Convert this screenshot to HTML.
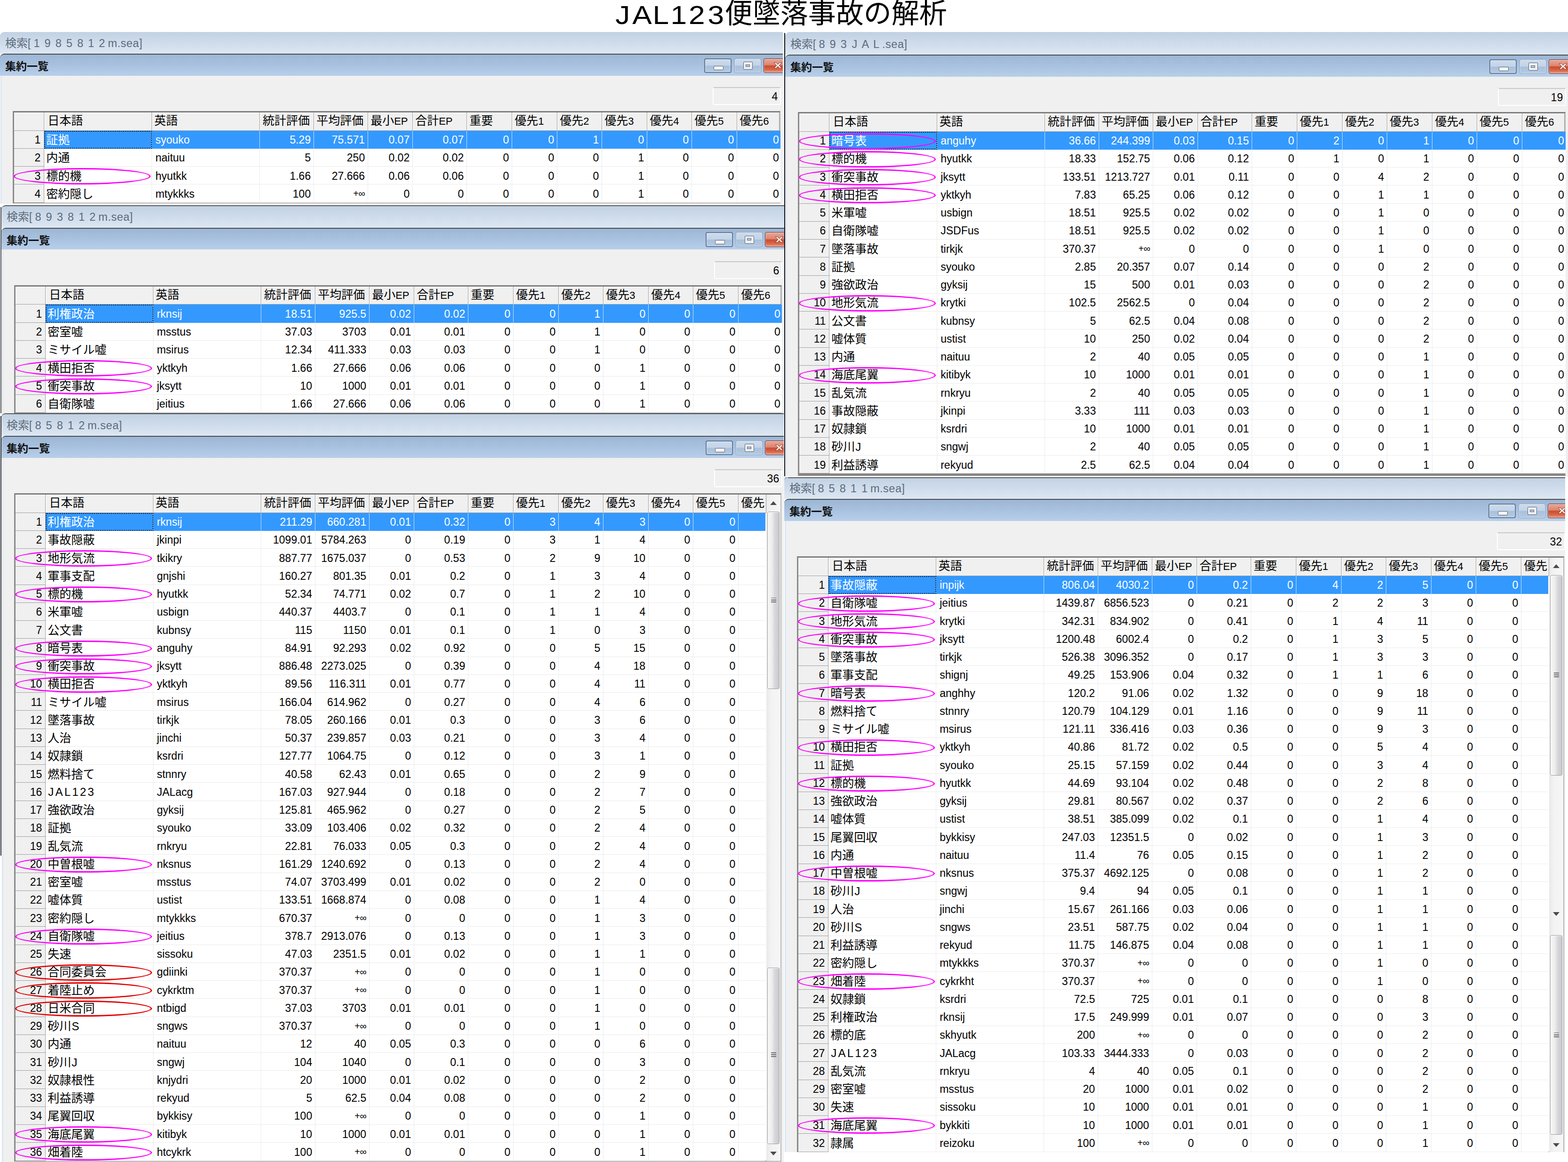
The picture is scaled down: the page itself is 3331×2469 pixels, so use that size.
<!DOCTYPE html><html lang="ja"><head><meta charset="utf-8"><title>JAL123便墜落事故の解析</title><style>
*{margin:0;padding:0;box-sizing:border-box}
html,body{width:3331px;height:2469px;background:#fff;overflow:hidden}
body{position:relative;font-family:"Liberation Sans","Noto Sans CJK JP",sans-serif;color:#000}
.ttl{position:absolute;left:1302px;top:-1px;height:60px;font-size:59px;line-height:60px;white-space:nowrap}
.ttl span{display:inline-block;width:58.4px;text-align:center;vertical-align:top;height:60px}
.ttl span.a{font-size:55px;transform:scaleX(1.13);position:relative;top:2.7px}
.ttl span.k{width:auto}
.ttl .j{margin-left:-.8px}
.w{position:absolute;overflow:hidden}
.wi{position:absolute;left:0;width:1700px}
.sbar{position:absolute;left:0;top:68px;width:1700px;height:46px;background:linear-gradient(#c2d1e3,#dce7f3);border-top-left-radius:9px}
.sbar.tl{top:66px;height:48px;border-top:2px solid #5a5a5a}
.sbar span{position:absolute;left:11px;top:8.5px;font-size:23.5px;line-height:30px;color:#5d6b7c;white-space:nowrap}
.sbar.tl span{left:11px;top:8.5px}
.sbar i{display:inline-block;width:23.1px;text-align:center;font-style:normal}
.sbar q{quotes:none;display:inline-block;width:9px;text-align:center}
.sbar a{letter-spacing:.5px;margin-left:1px}
.tbar{position:absolute;left:0;top:114px;width:1700px;height:46.5px;border-top:2px solid #4c4c4c;background:linear-gradient(#9cb6d5,#a6bfdd 40%,#b7cfea);border-top-left-radius:9px}
.tbar>span{position:absolute;left:11px;top:10px;font-size:23px;line-height:30px;color:#111;white-space:nowrap}
.tbar .j{font-weight:bold}
.bt{position:absolute;top:7.7px;height:31.6px;border:1.5px solid #6f86a4;border-radius:4px;background:linear-gradient(#cddbec 0,#c3d4e8 48%,#a9c0db 52%,#b4cae3 100%);box-shadow:inset 0 0 0 1px rgba(255,255,255,.45)}
.mn{left:1496.3px;width:57.7px;border:2px solid #5f7898}
.mn>div{position:absolute;left:18px;top:14.5px;width:21px;height:9px;background:#f4f4f4;border:1.5px solid #55667c;border-radius:2px}
.rs{left:1559.5px;width:57.2px;border-color:#8ea3bf}
.rs>div{position:absolute;left:18px;top:6.5px;width:20.5px;height:17px;background:#f0f0f0;border:1.5px solid #55667c;border-radius:2px}
.rs>div>div{position:absolute;left:4px;top:4.5px;width:9.5px;height:5px;background:#b8c8dc;border:1.5px solid #55667c}
.cl{left:1622px;width:62px;border-color:#5e2a28;background:linear-gradient(#e9a898 0,#dc8470 45%,#cd4a2c 52%,#d9694e 80%,#e9a088 100%)}
.cl svg{position:absolute;left:18.5px;top:6.5px}
.pn{position:absolute;left:0;top:160.5px;width:1700px;background:#f0f0f0}
.lf{position:absolute;left:0;top:0;width:4px;height:100%;background:linear-gradient(90deg,#fff 0,#d9e3f1 50%,#e4ebf5 100%)}
.ll{position:absolute;left:-2px;top:66px;width:2px;background:#333}
.cnt{position:absolute;left:1513.6px;top:185px;width:145.1px;height:38.4px;border:2px solid #fff;border-top-color:#c9c9c9;border-radius:3px;background:#f0f0f0;font-size:23px;line-height:36px;text-align:right;padding-right:4.5px}
.tb{position:absolute;box-sizing:content-box;border:3px solid #8a8a8a;border-right-width:2px;border-bottom-width:2.5px;border-top-color:#7e7e7e;border-right-color:#b8b8b8;border-bottom-color:#8a8a8a;background:#fff;overflow:visible}
.r{position:absolute;left:0;height:38.25px;display:flex;white-space:nowrap}
.r span{display:block;flex:none;height:38.25px;line-height:37.25px;padding:1.5px 5.5px 0 0;border-right:1.2px solid #ebebeb;border-bottom:1.2px solid #ebebeb;background:#fff;text-align:right;font-size:23px;overflow:hidden}
.r span:nth-child(1){width:63.5px;background:#f0f0f0;border-right:1.5px solid #a0a0a0;border-bottom:1.5px solid #a0a0a0;padding-right:6.5px}
.r span:nth-child(2){width:228.9px;text-align:left;padding-left:4.5px;font-size:25px}
.r span:nth-child(3){width:229.7px;text-align:left;padding-left:7.5px}
.r span:nth-child(4){width:114.3px}
.r span:nth-child(5){width:115px}
.r span:nth-child(6){width:95px}
.r span:nth-child(7){width:115px}
.r span:nth-child(8){width:96px}
.r span:nth-child(9){width:96px}
.r span:nth-child(10){width:95px}
.r span:nth-child(11){width:96px}
.r span:nth-child(12){width:95px}
.r span:nth-child(13){width:96px}
.r span:nth-child(14){width:92.5px;padding-right:3.5px;border-right:none}
.sc .r span:nth-child(14){width:57.5px}
.r.h span{background:#f0f0f0;border-right:1.5px solid #a0a0a0;border-bottom:1.5px solid #a0a0a0;text-align:left;padding-left:5.5px;padding-right:0;font-size:22px;line-height:34.25px;box-shadow:inset 1.5px 1.5px 0 #fafafa}
.r.h span:nth-child(2){padding-left:7.5px}
.r.h span:nth-child(3){padding-left:5px}
.r.sel span{background:#3399ff;color:#fff;border-bottom-color:#3399ff;border-right-color:#c8e0f8}
.r.sel span:nth-child(1){background:#f0f0f0;color:#000;border-bottom-color:#a0a0a0;border-right-color:#a0a0a0}
.r.sel span:nth-child(2){outline:2px dotted #001c4a;outline-offset:-2.5px}
.r u{text-decoration:none;font-size:20px;letter-spacing:-.5px;position:relative;top:-1.5px}
.j{display:inline-block;vertical-align:baseline;white-space:nowrap;font-weight:normal;line-height:1;font-family:"Liberation Sans","Noto Sans CJK JP",sans-serif}
.r.h .j{font-size:25px}
em{font-style:normal}
em.f1{margin-left:1px;font-size:24px}
em.f2{letter-spacing:3.2px;font-size:24px;margin-left:1px;position:relative;top:-1px}
.el{position:absolute;left:-1.5px;width:291px;height:34.5px;border:3px solid #ff00ff;border-radius:50%;z-index:3}
.sb{position:absolute;width:30px;background:linear-gradient(90deg,#e9e9e9 0,#f3f3f3 35%,#f6f6f6 100%);z-index:2}
.th{position:absolute;left:2px;width:26px;border:1.2px solid #9c9c9c;border-radius:3.5px;background:linear-gradient(90deg,#f7f7f7 0,#eeeeef 35%,#d6d6da 65%,#c9c9ce 100%);box-shadow:inset 1px 1px 0 #fff}
.gr{position:absolute;left:7.5px;width:10.5px;height:10.5px;background:linear-gradient(#6e6e6e 0,#6e6e6e 1.5px,transparent 1.5px,transparent 4.2px,#6e6e6e 4.2px,#6e6e6e 5.7px,transparent 5.7px,transparent 8.4px,#6e6e6e 8.4px,#6e6e6e 9.9px,transparent 9.9px)}
.au,.ad{position:absolute;left:8px;width:0;height:0;border-left:7.5px solid transparent;border-right:7.5px solid transparent}
.au{border-bottom:8px solid #4a4a4a}
.ad{border-top:8px solid #4a4a4a}
</style></head><body><div class="ttl"><span class="a" style="width:41.35px">J</span><span class="a" style="width:41.75px">A</span><span class="a" style="width:37.70px">L</span><span class="a" style="width:37.70px">1</span><span class="a" style="width:40.40px">2</span><span class="a" style="width:39.60px">3</span><span class="k"><b class="j">便墜落事故の解析</b></span></div><div class="w" style="left:0px;top:60px;width:1663px;height:372.5px;z-index:1"><div class="wi" style="top:-60px"><div class="sbar"><span><b class="j" style="font-size:24px;margin-right:-1.5px">検索</b><q>[</q><i>1</i><i>9</i><i>8</i><i>5</i><i>8</i><i>1</i><i>2</i><a>m.sea]</a></span></div><div class="tbar"><span><b class="j">集約一覧</b></span><div class="bt mn"><div></div></div><div class="bt rs"><div><div></div></div></div><div class="bt cl"><svg width="21" height="16" viewBox="0 0 28 20"><path d="M3 2 L9 2 L14 7.5 L19 2 L25 2 L17.5 10 L25 18 L19 18 L14 12.5 L9 18 L3 18 L10.5 10 Z" fill="#fff" stroke="#6a2a20" stroke-width="1.2"/></svg></div></div><div class="pn" style="height:272.0px"><div class="lf"></div></div><div class="cnt">4</div><div class="tb" style="left:27.3px;top:236.4px;width:1626px;height:190.75px"><div class="r h" style="top:0"><span style="width:63.5px"></span><span style="width:228.9px"><b class="j">日本語</b></span><span style="width:229.7px"><b class="j">英語</b></span><span style="width:114.3px"><b class="j">統計評価</b></span><span style="width:115px"><b class="j">平均評価</b></span><span style="width:95px"><b class="j">最小</b>EP</span><span style="width:115px"><b class="j">合計</b>EP</span><span style="width:96px"><b class="j">重要</b></span><span style="width:96px"><b class="j">優先</b>1</span><span style="width:95px"><b class="j">優先</b>2</span><span style="width:96px"><b class="j">優先</b>3</span><span style="width:95px"><b class="j">優先</b>4</span><span style="width:96px"><b class="j">優先</b>5</span><span style="width:90.59999999999991px"><b class="j">優先</b>6</span></div><div class="r sel" style="top:38.25px"><span>1</span><span><b class="j">証拠</b></span><span>syouko</span><span>5.29</span><span>75.571</span><span>0.07</span><span>0.07</span><span>0</span><span>0</span><span>1</span><span>0</span><span>0</span><span>0</span><span>0</span></div><div class="r" style="top:76.50px"><span>2</span><span><b class="j">内通</b></span><span>naituu</span><span>5</span><span>250</span><span>0.02</span><span>0.02</span><span>0</span><span>0</span><span>0</span><span>1</span><span>0</span><span>0</span><span>0</span></div><div class="r" style="top:114.75px"><span>3</span><span><b class="j">標的機</b></span><span>hyutkk</span><span>1.66</span><span>27.666</span><span>0.06</span><span>0.06</span><span>0</span><span>0</span><span>0</span><span>1</span><span>0</span><span>0</span><span>0</span></div><div class="r" style="top:153.00px"><span>4</span><span><b class="j">密約隠し</b></span><span>mtykkks</span><span>100</span><span><u>+∞</u></span><span>0</span><span>0</span><span>0</span><span>0</span><span>0</span><span>1</span><span>0</span><span>0</span><span>0</span></div><div class="el" style="top:117.95px;border-color:#ff00ff"></div></div></div></div><div class="w" style="left:1668px;top:62px;width:1663px;height:949.5px;z-index:1"><div class="wi" style="top:-60px"><div class="sbar" style="box-shadow:0 -2px 0 #c2d1e3"><span><b class="j" style="font-size:24px;margin-right:-1.5px">検索</b><q>[</q><i>8</i><i>9</i><i>3</i><i>J</i><i>A</i><i>L</i><a>.sea]</a></span></div><div class="tbar"><span><b class="j">集約一覧</b></span><div class="bt mn"><div></div></div><div class="bt rs"><div><div></div></div></div><div class="bt cl"><svg width="21" height="16" viewBox="0 0 28 20"><path d="M3 2 L9 2 L14 7.5 L19 2 L25 2 L17.5 10 L25 18 L19 18 L14 12.5 L9 18 L3 18 L10.5 10 Z" fill="#fff" stroke="#6a2a20" stroke-width="1.2"/></svg></div></div><div class="pn" style="height:849.0px"><div class="lf"></div></div><div class="cnt">19</div><div class="tb" style="left:27.3px;top:236.4px;width:1626px;height:764.50px;border-bottom:5px solid #858585"><div class="r h" style="top:0"><span style="width:63.5px"></span><span style="width:228.9px"><b class="j">日本語</b></span><span style="width:229.7px"><b class="j">英語</b></span><span style="width:114.3px"><b class="j">統計評価</b></span><span style="width:115px"><b class="j">平均評価</b></span><span style="width:95px"><b class="j">最小</b>EP</span><span style="width:115px"><b class="j">合計</b>EP</span><span style="width:96px"><b class="j">重要</b></span><span style="width:96px"><b class="j">優先</b>1</span><span style="width:95px"><b class="j">優先</b>2</span><span style="width:96px"><b class="j">優先</b>3</span><span style="width:95px"><b class="j">優先</b>4</span><span style="width:96px"><b class="j">優先</b>5</span><span style="width:90.59999999999991px"><b class="j">優先</b>6</span></div><div class="r sel" style="top:38.25px"><span>1</span><span><b class="j">暗号表</b></span><span>anguhy</span><span>36.66</span><span>244.399</span><span>0.03</span><span>0.15</span><span>0</span><span>2</span><span>0</span><span>1</span><span>0</span><span>0</span><span>0</span></div><div class="r" style="top:76.50px"><span>2</span><span><b class="j">標的機</b></span><span>hyutkk</span><span>18.33</span><span>152.75</span><span>0.06</span><span>0.12</span><span>0</span><span>1</span><span>0</span><span>1</span><span>0</span><span>0</span><span>0</span></div><div class="r" style="top:114.75px"><span>3</span><span><b class="j">衝突事故</b></span><span>jksytt</span><span>133.51</span><span>1213.727</span><span>0.01</span><span>0.11</span><span>0</span><span>0</span><span>4</span><span>2</span><span>0</span><span>0</span><span>0</span></div><div class="r" style="top:153.00px"><span>4</span><span><b class="j">横田拒否</b></span><span>yktkyh</span><span>7.83</span><span>65.25</span><span>0.06</span><span>0.12</span><span>0</span><span>0</span><span>1</span><span>1</span><span>0</span><span>0</span><span>0</span></div><div class="r" style="top:191.25px"><span>5</span><span><b class="j">米軍嘘</b></span><span>usbign</span><span>18.51</span><span>925.5</span><span>0.02</span><span>0.02</span><span>0</span><span>0</span><span>1</span><span>0</span><span>0</span><span>0</span><span>0</span></div><div class="r" style="top:229.50px"><span>6</span><span><b class="j">自衛隊嘘</b></span><span>JSDFus</span><span>18.51</span><span>925.5</span><span>0.02</span><span>0.02</span><span>0</span><span>0</span><span>1</span><span>0</span><span>0</span><span>0</span><span>0</span></div><div class="r" style="top:267.75px"><span>7</span><span><b class="j">墜落事故</b></span><span>tirkjk</span><span>370.37</span><span><u>+∞</u></span><span>0</span><span>0</span><span>0</span><span>0</span><span>1</span><span>0</span><span>0</span><span>0</span><span>0</span></div><div class="r" style="top:306.00px"><span>8</span><span><b class="j">証拠</b></span><span>syouko</span><span>2.85</span><span>20.357</span><span>0.07</span><span>0.14</span><span>0</span><span>0</span><span>0</span><span>2</span><span>0</span><span>0</span><span>0</span></div><div class="r" style="top:344.25px"><span>9</span><span><b class="j">強欲政治</b></span><span>gyksij</span><span>15</span><span>500</span><span>0.01</span><span>0.03</span><span>0</span><span>0</span><span>0</span><span>2</span><span>0</span><span>0</span><span>0</span></div><div class="r" style="top:382.50px"><span>10</span><span><b class="j">地形気流</b></span><span>krytki</span><span>102.5</span><span>2562.5</span><span>0</span><span>0.04</span><span>0</span><span>0</span><span>0</span><span>2</span><span>0</span><span>0</span><span>0</span></div><div class="r" style="top:420.75px"><span>11</span><span><b class="j">公文書</b></span><span>kubnsy</span><span>5</span><span>62.5</span><span>0.04</span><span>0.08</span><span>0</span><span>0</span><span>0</span><span>2</span><span>0</span><span>0</span><span>0</span></div><div class="r" style="top:459.00px"><span>12</span><span><b class="j">嘘体質</b></span><span>ustist</span><span>10</span><span>250</span><span>0.02</span><span>0.04</span><span>0</span><span>0</span><span>0</span><span>2</span><span>0</span><span>0</span><span>0</span></div><div class="r" style="top:497.25px"><span>13</span><span><b class="j">内通</b></span><span>naituu</span><span>2</span><span>40</span><span>0.05</span><span>0.05</span><span>0</span><span>0</span><span>0</span><span>1</span><span>0</span><span>0</span><span>0</span></div><div class="r" style="top:535.50px"><span>14</span><span><b class="j">海底尾翼</b></span><span>kitibyk</span><span>10</span><span>1000</span><span>0.01</span><span>0.01</span><span>0</span><span>0</span><span>0</span><span>1</span><span>0</span><span>0</span><span>0</span></div><div class="r" style="top:573.75px"><span>15</span><span><b class="j">乱気流</b></span><span>rnkryu</span><span>2</span><span>40</span><span>0.05</span><span>0.05</span><span>0</span><span>0</span><span>0</span><span>1</span><span>0</span><span>0</span><span>0</span></div><div class="r" style="top:612.00px"><span>16</span><span><b class="j">事故隠蔽</b></span><span>jkinpi</span><span>3.33</span><span>111</span><span>0.03</span><span>0.03</span><span>0</span><span>0</span><span>0</span><span>1</span><span>0</span><span>0</span><span>0</span></div><div class="r" style="top:650.25px"><span>17</span><span><b class="j">奴隷鎖</b></span><span>ksrdri</span><span>10</span><span>1000</span><span>0.01</span><span>0.01</span><span>0</span><span>0</span><span>0</span><span>1</span><span>0</span><span>0</span><span>0</span></div><div class="r" style="top:688.50px"><span>18</span><span><b class="j">砂川</b><em class="f1">J</em></span><span>sngwj</span><span>2</span><span>40</span><span>0.05</span><span>0.05</span><span>0</span><span>0</span><span>0</span><span>1</span><span>0</span><span>0</span><span>0</span></div><div class="r" style="top:726.75px"><span>19</span><span><b class="j">利益誘導</b></span><span>rekyud</span><span>2.5</span><span>62.5</span><span>0.04</span><span>0.04</span><span>0</span><span>0</span><span>0</span><span>1</span><span>0</span><span>0</span><span>0</span></div><div class="el" style="top:41.45px;border-color:#ff00ff"></div><div class="el" style="top:79.70px;border-color:#ff00ff"></div><div class="el" style="top:117.95px;border-color:#ff00ff"></div><div class="el" style="top:156.20px;border-color:#ff00ff"></div><div class="el" style="top:385.70px;border-color:#ff00ff"></div><div class="el" style="top:538.70px;border-color:#ff00ff"></div></div></div></div><div class="w" style="left:3px;top:429.7px;width:1663px;height:452px;z-index:2"><div class="wi" style="top:-60px"><div class="sbar tl"><span><b class="j" style="font-size:24px;margin-right:-1.5px">検索</b><q>[</q><i>8</i><i>9</i><i>3</i><i>8</i><i>1</i><i>2</i><a>m.sea]</a></span></div><div class="tbar"><span><b class="j">集約一覧</b></span><div class="bt mn"><div></div></div><div class="bt rs"><div><div></div></div></div><div class="bt cl"><svg width="21" height="16" viewBox="0 0 28 20"><path d="M3 2 L9 2 L14 7.5 L19 2 L25 2 L17.5 10 L25 18 L19 18 L14 12.5 L9 18 L3 18 L10.5 10 Z" fill="#fff" stroke="#6a2a20" stroke-width="1.2"/></svg></div></div><div class="pn" style="height:351.5px"><div class="lf"></div></div><div class="cnt">6</div><div class="tb" style="left:27.3px;top:236.4px;width:1626px;height:267.25px"><div class="r h" style="top:0"><span style="width:63.5px"></span><span style="width:228.9px"><b class="j">日本語</b></span><span style="width:229.7px"><b class="j">英語</b></span><span style="width:114.3px"><b class="j">統計評価</b></span><span style="width:115px"><b class="j">平均評価</b></span><span style="width:95px"><b class="j">最小</b>EP</span><span style="width:115px"><b class="j">合計</b>EP</span><span style="width:96px"><b class="j">重要</b></span><span style="width:96px"><b class="j">優先</b>1</span><span style="width:95px"><b class="j">優先</b>2</span><span style="width:96px"><b class="j">優先</b>3</span><span style="width:95px"><b class="j">優先</b>4</span><span style="width:96px"><b class="j">優先</b>5</span><span style="width:90.59999999999991px"><b class="j">優先</b>6</span></div><div class="r sel" style="top:38.25px"><span>1</span><span><b class="j">利権政治</b></span><span>rknsij</span><span>18.51</span><span>925.5</span><span>0.02</span><span>0.02</span><span>0</span><span>0</span><span>1</span><span>0</span><span>0</span><span>0</span><span>0</span></div><div class="r" style="top:76.50px"><span>2</span><span><b class="j">密室嘘</b></span><span>msstus</span><span>37.03</span><span>3703</span><span>0.01</span><span>0.01</span><span>0</span><span>0</span><span>1</span><span>0</span><span>0</span><span>0</span><span>0</span></div><div class="r" style="top:114.75px"><span>3</span><span><b class="j">ミサイル嘘</b></span><span>msirus</span><span>12.34</span><span>411.333</span><span>0.03</span><span>0.03</span><span>0</span><span>0</span><span>1</span><span>0</span><span>0</span><span>0</span><span>0</span></div><div class="r" style="top:153.00px"><span>4</span><span><b class="j">横田拒否</b></span><span>yktkyh</span><span>1.66</span><span>27.666</span><span>0.06</span><span>0.06</span><span>0</span><span>0</span><span>0</span><span>1</span><span>0</span><span>0</span><span>0</span></div><div class="r" style="top:191.25px"><span>5</span><span><b class="j">衝突事故</b></span><span>jksytt</span><span>10</span><span>1000</span><span>0.01</span><span>0.01</span><span>0</span><span>0</span><span>0</span><span>1</span><span>0</span><span>0</span><span>0</span></div><div class="r" style="top:229.50px"><span>6</span><span><b class="j">自衛隊嘘</b></span><span>jeitius</span><span>1.66</span><span>27.666</span><span>0.06</span><span>0.06</span><span>0</span><span>0</span><span>0</span><span>1</span><span>0</span><span>0</span><span>0</span></div><div class="el" style="top:156.20px;border-color:#ff00ff"></div><div class="el" style="top:194.45px;border-color:#ff00ff"></div></div></div></div><div class="w" style="left:3px;top:872px;width:1662px;height:1640px;z-index:3"><div class="wi" style="top:-60px"><div class="sbar tl"><span><b class="j" style="font-size:24px;margin-right:-1.5px">検索</b><q>[</q><i>8</i><i>5</i><i>8</i><i>1</i><i>2</i><a>m.sea]</a></span></div><div class="tbar"><span><b class="j">集約一覧</b></span><div class="bt mn"><div></div></div><div class="bt rs"><div><div></div></div></div><div class="bt cl"><svg width="21" height="16" viewBox="0 0 28 20"><path d="M3 2 L9 2 L14 7.5 L19 2 L25 2 L17.5 10 L25 18 L19 18 L14 12.5 L9 18 L3 18 L10.5 10 Z" fill="#fff" stroke="#6a2a20" stroke-width="1.2"/></svg></div></div><div class="pn" style="height:1539.5px"><div class="lf"></div></div><div class="cnt">36</div><div class="tb sc" style="left:27.3px;top:236.4px;width:1624.5px;height:1414.75px"><div class="r h" style="top:0"><span style="width:63.5px"></span><span style="width:228.9px"><b class="j">日本語</b></span><span style="width:229.7px"><b class="j">英語</b></span><span style="width:114.3px"><b class="j">統計評価</b></span><span style="width:115px"><b class="j">平均評価</b></span><span style="width:95px"><b class="j">最小</b>EP</span><span style="width:115px"><b class="j">合計</b>EP</span><span style="width:96px"><b class="j">重要</b></span><span style="width:96px"><b class="j">優先</b>1</span><span style="width:95px"><b class="j">優先</b>2</span><span style="width:96px"><b class="j">優先</b>3</span><span style="width:95px"><b class="j">優先</b>4</span><span style="width:96px"><b class="j">優先</b>5</span><span style="width:59.09999999999991px"><b class="j">優先</b></span></div><div class="r sel" style="top:38.25px"><span>1</span><span><b class="j">利権政治</b></span><span>rknsij</span><span>211.29</span><span>660.281</span><span>0.01</span><span>0.32</span><span>0</span><span>3</span><span>4</span><span>3</span><span>0</span><span>0</span><span></span></div><div class="r" style="top:76.50px"><span>2</span><span><b class="j">事故隠蔽</b></span><span>jkinpi</span><span>1099.01</span><span>5784.263</span><span>0</span><span>0.19</span><span>0</span><span>3</span><span>1</span><span>4</span><span>0</span><span>0</span><span></span></div><div class="r" style="top:114.75px"><span>3</span><span><b class="j">地形気流</b></span><span>tkikry</span><span>887.77</span><span>1675.037</span><span>0</span><span>0.53</span><span>0</span><span>2</span><span>9</span><span>10</span><span>0</span><span>0</span><span></span></div><div class="r" style="top:153.00px"><span>4</span><span><b class="j">軍事支配</b></span><span>gnjshi</span><span>160.27</span><span>801.35</span><span>0.01</span><span>0.2</span><span>0</span><span>1</span><span>3</span><span>4</span><span>0</span><span>0</span><span></span></div><div class="r" style="top:191.25px"><span>5</span><span><b class="j">標的機</b></span><span>hyutkk</span><span>52.34</span><span>74.771</span><span>0.02</span><span>0.7</span><span>0</span><span>1</span><span>2</span><span>10</span><span>0</span><span>0</span><span></span></div><div class="r" style="top:229.50px"><span>6</span><span><b class="j">米軍嘘</b></span><span>usbign</span><span>440.37</span><span>4403.7</span><span>0</span><span>0.1</span><span>0</span><span>1</span><span>1</span><span>4</span><span>0</span><span>0</span><span></span></div><div class="r" style="top:267.75px"><span>7</span><span><b class="j">公文書</b></span><span>kubnsy</span><span>115</span><span>1150</span><span>0.01</span><span>0.1</span><span>0</span><span>1</span><span>0</span><span>3</span><span>0</span><span>0</span><span></span></div><div class="r" style="top:306.00px"><span>8</span><span><b class="j">暗号表</b></span><span>anguhy</span><span>84.91</span><span>92.293</span><span>0.02</span><span>0.92</span><span>0</span><span>0</span><span>5</span><span>15</span><span>0</span><span>0</span><span></span></div><div class="r" style="top:344.25px"><span>9</span><span><b class="j">衝突事故</b></span><span>jksytt</span><span>886.48</span><span>2273.025</span><span>0</span><span>0.39</span><span>0</span><span>0</span><span>4</span><span>18</span><span>0</span><span>0</span><span></span></div><div class="r" style="top:382.50px"><span>10</span><span><b class="j">横田拒否</b></span><span>yktkyh</span><span>89.56</span><span>116.311</span><span>0.01</span><span>0.77</span><span>0</span><span>0</span><span>4</span><span>11</span><span>0</span><span>0</span><span></span></div><div class="r" style="top:420.75px"><span>11</span><span><b class="j">ミサイル嘘</b></span><span>msirus</span><span>166.04</span><span>614.962</span><span>0</span><span>0.27</span><span>0</span><span>0</span><span>4</span><span>6</span><span>0</span><span>0</span><span></span></div><div class="r" style="top:459.00px"><span>12</span><span><b class="j">墜落事故</b></span><span>tirkjk</span><span>78.05</span><span>260.166</span><span>0.01</span><span>0.3</span><span>0</span><span>0</span><span>3</span><span>6</span><span>0</span><span>0</span><span></span></div><div class="r" style="top:497.25px"><span>13</span><span><b class="j">人治</b></span><span>jinchi</span><span>50.37</span><span>239.857</span><span>0.03</span><span>0.21</span><span>0</span><span>0</span><span>3</span><span>4</span><span>0</span><span>0</span><span></span></div><div class="r" style="top:535.50px"><span>14</span><span><b class="j">奴隷鎖</b></span><span>ksrdri</span><span>127.77</span><span>1064.75</span><span>0</span><span>0.12</span><span>0</span><span>0</span><span>3</span><span>1</span><span>0</span><span>0</span><span></span></div><div class="r" style="top:573.75px"><span>15</span><span><b class="j">燃料捨て</b></span><span>stnnry</span><span>40.58</span><span>62.43</span><span>0.01</span><span>0.65</span><span>0</span><span>0</span><span>2</span><span>9</span><span>0</span><span>0</span><span></span></div><div class="r" style="top:612.00px"><span>16</span><span><em class="f2">JAL123</em></span><span>JALacg</span><span>167.03</span><span>927.944</span><span>0</span><span>0.18</span><span>0</span><span>0</span><span>2</span><span>7</span><span>0</span><span>0</span><span></span></div><div class="r" style="top:650.25px"><span>17</span><span><b class="j">強欲政治</b></span><span>gyksij</span><span>125.81</span><span>465.962</span><span>0</span><span>0.27</span><span>0</span><span>0</span><span>2</span><span>5</span><span>0</span><span>0</span><span></span></div><div class="r" style="top:688.50px"><span>18</span><span><b class="j">証拠</b></span><span>syouko</span><span>33.09</span><span>103.406</span><span>0.02</span><span>0.32</span><span>0</span><span>0</span><span>2</span><span>4</span><span>0</span><span>0</span><span></span></div><div class="r" style="top:726.75px"><span>19</span><span><b class="j">乱気流</b></span><span>rnkryu</span><span>22.81</span><span>76.033</span><span>0.05</span><span>0.3</span><span>0</span><span>0</span><span>2</span><span>4</span><span>0</span><span>0</span><span></span></div><div class="r" style="top:765.00px"><span>20</span><span><b class="j">中曽根嘘</b></span><span>nksnus</span><span>161.29</span><span>1240.692</span><span>0</span><span>0.13</span><span>0</span><span>0</span><span>2</span><span>4</span><span>0</span><span>0</span><span></span></div><div class="r" style="top:803.25px"><span>21</span><span><b class="j">密室嘘</b></span><span>msstus</span><span>74.07</span><span>3703.499</span><span>0.01</span><span>0.02</span><span>0</span><span>0</span><span>2</span><span>0</span><span>0</span><span>0</span><span></span></div><div class="r" style="top:841.50px"><span>22</span><span><b class="j">嘘体質</b></span><span>ustist</span><span>133.51</span><span>1668.874</span><span>0</span><span>0.08</span><span>0</span><span>0</span><span>1</span><span>4</span><span>0</span><span>0</span><span></span></div><div class="r" style="top:879.75px"><span>23</span><span><b class="j">密約隠し</b></span><span>mtykkks</span><span>670.37</span><span><u>+∞</u></span><span>0</span><span>0</span><span>0</span><span>0</span><span>1</span><span>3</span><span>0</span><span>0</span><span></span></div><div class="r" style="top:918.00px"><span>24</span><span><b class="j">自衛隊嘘</b></span><span>jeitius</span><span>378.7</span><span>2913.076</span><span>0</span><span>0.13</span><span>0</span><span>0</span><span>1</span><span>3</span><span>0</span><span>0</span><span></span></div><div class="r" style="top:956.25px"><span>25</span><span><b class="j">失速</b></span><span>sissoku</span><span>47.03</span><span>2351.5</span><span>0.01</span><span>0.02</span><span>0</span><span>0</span><span>1</span><span>1</span><span>0</span><span>0</span><span></span></div><div class="r" style="top:994.50px"><span>26</span><span><b class="j">合同委員会</b></span><span>gdiinki</span><span>370.37</span><span><u>+∞</u></span><span>0</span><span>0</span><span>0</span><span>0</span><span>1</span><span>0</span><span>0</span><span>0</span><span></span></div><div class="r" style="top:1032.75px"><span>27</span><span><b class="j">着陸止め</b></span><span>cykrktm</span><span>370.37</span><span><u>+∞</u></span><span>0</span><span>0</span><span>0</span><span>0</span><span>1</span><span>0</span><span>0</span><span>0</span><span></span></div><div class="r" style="top:1071.00px"><span>28</span><span><b class="j">日米合同</b></span><span>ntbigd</span><span>37.03</span><span>3703</span><span>0.01</span><span>0.01</span><span>0</span><span>0</span><span>1</span><span>0</span><span>0</span><span>0</span><span></span></div><div class="r" style="top:1109.25px"><span>29</span><span><b class="j">砂川</b><em class="f1">S</em></span><span>sngws</span><span>370.37</span><span><u>+∞</u></span><span>0</span><span>0</span><span>0</span><span>0</span><span>1</span><span>0</span><span>0</span><span>0</span><span></span></div><div class="r" style="top:1147.50px"><span>30</span><span><b class="j">内通</b></span><span>naituu</span><span>12</span><span>40</span><span>0.05</span><span>0.3</span><span>0</span><span>0</span><span>0</span><span>6</span><span>0</span><span>0</span><span></span></div><div class="r" style="top:1185.75px"><span>31</span><span><b class="j">砂川</b><em class="f1">J</em></span><span>sngwj</span><span>104</span><span>1040</span><span>0</span><span>0.1</span><span>0</span><span>0</span><span>0</span><span>3</span><span>0</span><span>0</span><span></span></div><div class="r" style="top:1224.00px"><span>32</span><span><b class="j">奴隷根性</b></span><span>knjydri</span><span>20</span><span>1000</span><span>0.01</span><span>0.02</span><span>0</span><span>0</span><span>0</span><span>2</span><span>0</span><span>0</span><span></span></div><div class="r" style="top:1262.25px"><span>33</span><span><b class="j">利益誘導</b></span><span>rekyud</span><span>5</span><span>62.5</span><span>0.04</span><span>0.08</span><span>0</span><span>0</span><span>0</span><span>2</span><span>0</span><span>0</span><span></span></div><div class="r" style="top:1300.50px"><span>34</span><span><b class="j">尾翼回収</b></span><span>bykkisy</span><span>100</span><span><u>+∞</u></span><span>0</span><span>0</span><span>0</span><span>0</span><span>0</span><span>1</span><span>0</span><span>0</span><span></span></div><div class="r" style="top:1338.75px"><span>35</span><span><b class="j">海底尾翼</b></span><span>kitibyk</span><span>10</span><span>1000</span><span>0.01</span><span>0.01</span><span>0</span><span>0</span><span>0</span><span>1</span><span>0</span><span>0</span><span></span></div><div class="r" style="top:1377.00px"><span>36</span><span><b class="j">畑着陸</b></span><span>htcykrk</span><span>100</span><span><u>+∞</u></span><span>0</span><span>0</span><span>0</span><span>0</span><span>0</span><span>1</span><span>0</span><span>0</span><span></span></div><div class="sb" style="left:1594.5px;top:0;height:1415.25px"><div class="au" style="top:13.599999999999909px"></div><div class="th" style="top:36.09999999999991px;height:376.5px"><div class="gr" style="top:181.5px"></div></div><div class="th" style="top:1004.5999999999999px;height:375.0px"><div class="gr" style="top:179.5px"></div></div><div class="ad" style="top:1395.6px"></div></div><div class="el" style="top:117.95px;border-color:#ff00ff"></div><div class="el" style="top:194.45px;border-color:#ff00ff"></div><div class="el" style="top:309.20px;border-color:#ff00ff"></div><div class="el" style="top:347.45px;border-color:#ff00ff"></div><div class="el" style="top:385.70px;border-color:#ff00ff"></div><div class="el" style="top:768.20px;border-color:#ff00ff"></div><div class="el" style="top:921.20px;border-color:#ff00ff"></div><div class="el" style="top:997.70px;border-color:#e00000"></div><div class="el" style="top:1035.95px;border-color:#e00000"></div><div class="el" style="top:1074.20px;border-color:#e00000"></div><div class="el" style="top:1341.95px;border-color:#ff00ff"></div><div class="el" style="top:1380.20px;border-color:#ff00ff"></div></div></div></div><div class="w" style="left:1666px;top:1006px;width:1659px;height:1442px;z-index:3"><div class="wi" style="top:-60px"><div class="sbar tl"><span><b class="j" style="font-size:24px;margin-right:-1.5px">検索</b><q>[</q><i>8</i><i>5</i><i>8</i><i>1</i><i>1</i><a>m.sea]</a></span></div><div class="tbar"><span><b class="j">集約一覧</b></span><div class="bt mn"><div></div></div><div class="bt rs"><div><div></div></div></div><div class="bt cl"><svg width="21" height="16" viewBox="0 0 28 20"><path d="M3 2 L9 2 L14 7.5 L19 2 L25 2 L17.5 10 L25 18 L19 18 L14 12.5 L9 18 L3 18 L10.5 10 Z" fill="#fff" stroke="#6a2a20" stroke-width="1.2"/></svg></div></div><div class="pn" style="height:1341.5px"><div class="lf"></div></div><div class="cnt">32</div><div class="tb sc" style="left:27.3px;top:236.4px;width:1624.5px;height:1261.75px"><div class="r h" style="top:0"><span style="width:63.5px"></span><span style="width:228.9px"><b class="j">日本語</b></span><span style="width:229.7px"><b class="j">英語</b></span><span style="width:114.3px"><b class="j">統計評価</b></span><span style="width:115px"><b class="j">平均評価</b></span><span style="width:95px"><b class="j">最小</b>EP</span><span style="width:115px"><b class="j">合計</b>EP</span><span style="width:96px"><b class="j">重要</b></span><span style="width:96px"><b class="j">優先</b>1</span><span style="width:95px"><b class="j">優先</b>2</span><span style="width:96px"><b class="j">優先</b>3</span><span style="width:95px"><b class="j">優先</b>4</span><span style="width:96px"><b class="j">優先</b>5</span><span style="width:59.09999999999991px"><b class="j">優先</b></span></div><div class="r sel" style="top:38.25px"><span>1</span><span><b class="j">事故隠蔽</b></span><span>inpijk</span><span>806.04</span><span>4030.2</span><span>0</span><span>0.2</span><span>0</span><span>4</span><span>2</span><span>5</span><span>0</span><span>0</span><span></span></div><div class="r" style="top:76.50px"><span>2</span><span><b class="j">自衛隊嘘</b></span><span>jeitius</span><span>1439.87</span><span>6856.523</span><span>0</span><span>0.21</span><span>0</span><span>2</span><span>2</span><span>3</span><span>0</span><span>0</span><span></span></div><div class="r" style="top:114.75px"><span>3</span><span><b class="j">地形気流</b></span><span>krytki</span><span>342.31</span><span>834.902</span><span>0</span><span>0.41</span><span>0</span><span>1</span><span>4</span><span>11</span><span>0</span><span>0</span><span></span></div><div class="r" style="top:153.00px"><span>4</span><span><b class="j">衝突事故</b></span><span>jksytt</span><span>1200.48</span><span>6002.4</span><span>0</span><span>0.2</span><span>0</span><span>1</span><span>3</span><span>5</span><span>0</span><span>0</span><span></span></div><div class="r" style="top:191.25px"><span>5</span><span><b class="j">墜落事故</b></span><span>tirkjk</span><span>526.38</span><span>3096.352</span><span>0</span><span>0.17</span><span>0</span><span>1</span><span>3</span><span>3</span><span>0</span><span>0</span><span></span></div><div class="r" style="top:229.50px"><span>6</span><span><b class="j">軍事支配</b></span><span>shignj</span><span>49.25</span><span>153.906</span><span>0.04</span><span>0.32</span><span>0</span><span>1</span><span>1</span><span>6</span><span>0</span><span>0</span><span></span></div><div class="r" style="top:267.75px"><span>7</span><span><b class="j">暗号表</b></span><span>anghhy</span><span>120.2</span><span>91.06</span><span>0.02</span><span>1.32</span><span>0</span><span>0</span><span>9</span><span>18</span><span>0</span><span>0</span><span></span></div><div class="r" style="top:306.00px"><span>8</span><span><b class="j">燃料捨て</b></span><span>stnnry</span><span>120.79</span><span>104.129</span><span>0.01</span><span>1.16</span><span>0</span><span>0</span><span>9</span><span>11</span><span>0</span><span>0</span><span></span></div><div class="r" style="top:344.25px"><span>9</span><span><b class="j">ミサイル嘘</b></span><span>msirus</span><span>121.11</span><span>336.416</span><span>0.03</span><span>0.36</span><span>0</span><span>0</span><span>9</span><span>3</span><span>0</span><span>0</span><span></span></div><div class="r" style="top:382.50px"><span>10</span><span><b class="j">横田拒否</b></span><span>yktkyh</span><span>40.86</span><span>81.72</span><span>0.02</span><span>0.5</span><span>0</span><span>0</span><span>5</span><span>4</span><span>0</span><span>0</span><span></span></div><div class="r" style="top:420.75px"><span>11</span><span><b class="j">証拠</b></span><span>syouko</span><span>25.15</span><span>57.159</span><span>0.02</span><span>0.44</span><span>0</span><span>0</span><span>3</span><span>4</span><span>0</span><span>0</span><span></span></div><div class="r" style="top:459.00px"><span>12</span><span><b class="j">標的機</b></span><span>hyutkk</span><span>44.69</span><span>93.104</span><span>0.02</span><span>0.48</span><span>0</span><span>0</span><span>2</span><span>8</span><span>0</span><span>0</span><span></span></div><div class="r" style="top:497.25px"><span>13</span><span><b class="j">強欲政治</b></span><span>gyksij</span><span>29.81</span><span>80.567</span><span>0.02</span><span>0.37</span><span>0</span><span>0</span><span>2</span><span>6</span><span>0</span><span>0</span><span></span></div><div class="r" style="top:535.50px"><span>14</span><span><b class="j">嘘体質</b></span><span>ustist</span><span>38.51</span><span>385.099</span><span>0.02</span><span>0.1</span><span>0</span><span>0</span><span>1</span><span>4</span><span>0</span><span>0</span><span></span></div><div class="r" style="top:573.75px"><span>15</span><span><b class="j">尾翼回収</b></span><span>bykkisy</span><span>247.03</span><span>12351.5</span><span>0</span><span>0.02</span><span>0</span><span>0</span><span>1</span><span>3</span><span>0</span><span>0</span><span></span></div><div class="r" style="top:612.00px"><span>16</span><span><b class="j">内通</b></span><span>naituu</span><span>11.4</span><span>76</span><span>0.05</span><span>0.15</span><span>0</span><span>0</span><span>1</span><span>2</span><span>0</span><span>0</span><span></span></div><div class="r" style="top:650.25px"><span>17</span><span><b class="j">中曽根嘘</b></span><span>nksnus</span><span>375.37</span><span>4692.125</span><span>0</span><span>0.08</span><span>0</span><span>0</span><span>1</span><span>2</span><span>0</span><span>0</span><span></span></div><div class="r" style="top:688.50px"><span>18</span><span><b class="j">砂川</b><em class="f1">J</em></span><span>sngwj</span><span>9.4</span><span>94</span><span>0.05</span><span>0.1</span><span>0</span><span>0</span><span>1</span><span>1</span><span>0</span><span>0</span><span></span></div><div class="r" style="top:726.75px"><span>19</span><span><b class="j">人治</b></span><span>jinchi</span><span>15.67</span><span>261.166</span><span>0.03</span><span>0.06</span><span>0</span><span>0</span><span>1</span><span>1</span><span>0</span><span>0</span><span></span></div><div class="r" style="top:765.00px"><span>20</span><span><b class="j">砂川</b><em class="f1">S</em></span><span>sngws</span><span>23.51</span><span>587.75</span><span>0.02</span><span>0.04</span><span>0</span><span>0</span><span>1</span><span>1</span><span>0</span><span>0</span><span></span></div><div class="r" style="top:803.25px"><span>21</span><span><b class="j">利益誘導</b></span><span>rekyud</span><span>11.75</span><span>146.875</span><span>0.04</span><span>0.08</span><span>0</span><span>0</span><span>1</span><span>1</span><span>0</span><span>0</span><span></span></div><div class="r" style="top:841.50px"><span>22</span><span><b class="j">密約隠し</b></span><span>mtykkks</span><span>370.37</span><span><u>+∞</u></span><span>0</span><span>0</span><span>0</span><span>0</span><span>1</span><span>0</span><span>0</span><span>0</span><span></span></div><div class="r" style="top:879.75px"><span>23</span><span><b class="j">畑着陸</b></span><span>cykrkht</span><span>370.37</span><span><u>+∞</u></span><span>0</span><span>0</span><span>0</span><span>0</span><span>1</span><span>0</span><span>0</span><span>0</span><span></span></div><div class="r" style="top:918.00px"><span>24</span><span><b class="j">奴隷鎖</b></span><span>ksrdri</span><span>72.5</span><span>725</span><span>0.01</span><span>0.1</span><span>0</span><span>0</span><span>0</span><span>8</span><span>0</span><span>0</span><span></span></div><div class="r" style="top:956.25px"><span>25</span><span><b class="j">利権政治</b></span><span>rknsij</span><span>17.5</span><span>249.999</span><span>0.01</span><span>0.07</span><span>0</span><span>0</span><span>0</span><span>3</span><span>0</span><span>0</span><span></span></div><div class="r" style="top:994.50px"><span>26</span><span><b class="j">標的底</b></span><span>skhyutk</span><span>200</span><span><u>+∞</u></span><span>0</span><span>0</span><span>0</span><span>0</span><span>0</span><span>2</span><span>0</span><span>0</span><span></span></div><div class="r" style="top:1032.75px"><span>27</span><span><em class="f2">JAL123</em></span><span>JALacg</span><span>103.33</span><span>3444.333</span><span>0</span><span>0.03</span><span>0</span><span>0</span><span>0</span><span>2</span><span>0</span><span>0</span><span></span></div><div class="r" style="top:1071.00px"><span>28</span><span><b class="j">乱気流</b></span><span>rnkryu</span><span>4</span><span>40</span><span>0.05</span><span>0.1</span><span>0</span><span>0</span><span>0</span><span>2</span><span>0</span><span>0</span><span></span></div><div class="r" style="top:1109.25px"><span>29</span><span><b class="j">密室嘘</b></span><span>msstus</span><span>20</span><span>1000</span><span>0.01</span><span>0.02</span><span>0</span><span>0</span><span>0</span><span>2</span><span>0</span><span>0</span><span></span></div><div class="r" style="top:1147.50px"><span>30</span><span><b class="j">失速</b></span><span>sissoku</span><span>10</span><span>1000</span><span>0.01</span><span>0.01</span><span>0</span><span>0</span><span>0</span><span>1</span><span>0</span><span>0</span><span></span></div><div class="r" style="top:1185.75px"><span>31</span><span><b class="j">海底尾翼</b></span><span>bykkiti</span><span>10</span><span>1000</span><span>0.01</span><span>0.01</span><span>0</span><span>0</span><span>0</span><span>1</span><span>0</span><span>0</span><span></span></div><div class="r" style="top:1224.00px"><span>32</span><span><b class="j">隷属</b></span><span>reizoku</span><span>100</span><span><u>+∞</u></span><span>0</span><span>0</span><span>0</span><span>0</span><span>0</span><span>1</span><span>0</span><span>0</span><span></span></div><div class="sb" style="left:1594.5px;top:0;height:1262.25px"><div class="au" style="top:13.599999999999909px"></div><div class="th" style="top:36.59999999999991px;height:426.0px"><div class="gr" style="top:206.5px"></div></div><div class="ad" style="top:752.5999999999999px"></div><div class="th" style="top:801.5999999999999px;height:424.5px"><div class="gr" style="top:206.5px"></div></div><div class="ad" style="top:1243.6px"></div></div><div class="el" style="top:79.70px;border-color:#ff00ff"></div><div class="el" style="top:117.95px;border-color:#ff00ff"></div><div class="el" style="top:156.20px;border-color:#ff00ff"></div><div class="el" style="top:270.95px;border-color:#ff00ff"></div><div class="el" style="top:385.70px;border-color:#ff00ff"></div><div class="el" style="top:462.20px;border-color:#ff00ff"></div><div class="el" style="top:653.45px;border-color:#ff00ff"></div><div class="el" style="top:882.95px;border-color:#ff00ff"></div><div class="el" style="top:1188.95px;border-color:#ff00ff"></div></div></div></div><div style="position:absolute;left:1666px;top:70px;width:2px;height:942.5px;background:#111;z-index:4"></div><div style="position:absolute;left:1665px;top:1011.5px;width:1666px;height:2.5px;background:#fff;z-index:5"></div><div style="position:absolute;left:1674px;top:1013.8px;width:1651px;height:2px;background:#5a5a5a;z-index:5"></div><div style="position:absolute;left:1px;top:884px;width:2px;height:934px;background:#333;z-index:4"></div><div style="position:absolute;left:1px;top:440px;width:2px;height:438px;background:#555;z-index:4"></div></body></html>
